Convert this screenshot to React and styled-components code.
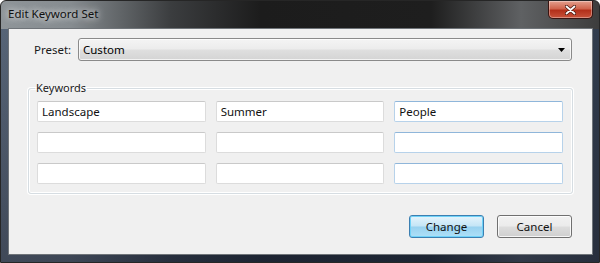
import React from "react";
import styled, { createGlobalStyle } from "styled-components";

const GlobalStyle = createGlobalStyle`
  html, body {
    margin: 0;
    padding: 0;
    background: #ffffff;
  }
  body {
    font-family: "Noto Sans", "Open Sans", sans-serif;
    font-size: 11.5px;
    color: #000;
  }
`

const Window = styled.div`
  width: 600px;
  height: 263px;
  box-sizing: border-box;
  display: flex;
  flex-direction: column;
  border: 1px solid #262626;
  border-radius: 6px 6px 0 0;
  overflow: hidden;
  background:
    linear-gradient(180deg, rgba(0,0,0,0) 0, rgba(0,0,0,0) 28px, rgba(40,60,90,0.55) 28px, rgba(30,40,60,0.7) 100%),
    linear-gradient(90deg, #8f9599 0, #868c90 70px, #3b3d3f 170px, #1c1c1c 260px, #1e1e1e 430px, #5f6163 520px, #3c3c3c 600px);
`

const TitleBar = styled.div`
  height: 27px;
  display: flex;
  align-items: flex-start;
  padding-left: 7px;
`

const Title = styled.div`
  font-size: 11.5px;
  line-height: 16px;
  margin-top: 5px;
  color: #101010;
  text-shadow: 0 0 6px rgba(255,255,255,0.9), 0 0 10px rgba(255,255,255,0.6);
`

const CloseButton = styled.div`
  margin-left: auto;
  margin-right: 6px;
  width: 45px;
  height: 18px;
  box-sizing: border-box;
  border: 1px solid #3a1410;
  border-top: none;
  border-radius: 0 0 5px 5px;
  background: linear-gradient(180deg, #e4a08e 0, #d0644c 45%, #b3301a 55%, #c8523a 100%);
  box-shadow: inset 0 0 0 1px rgba(255,255,255,0.35);
  display: flex;
  align-items: center;
  justify-content: center;

  svg {
    width: 11px;
    height: 10px;
  }
`

const Client = styled.div`
  flex: 1;
  margin: 0 6px 7px 7px;
  background: #f0f0f0;
  border: 1px solid #6f7479;
  display: flex;
  flex-direction: column;
  padding: 9px 20px 0 19px;
`

const PresetRow = styled.div`
  display: flex;
  align-items: center;
  padding-left: 6px;
`

const Label = styled.div`
  width: 44px;
  color: #1a1a1a;
`

const Dropdown = styled.div`
  flex: 1;
  height: 23px;
  box-sizing: border-box;
  border: 1px solid #8a8a8a;
  border-radius: 3px;
  background: linear-gradient(180deg, #f4f4f4 0, #ececec 48%, #dfdfdf 52%, #d4d4d4 100%);
  box-shadow: inset 0 0 0 1px rgba(255,255,255,0.7);
  display: flex;
  align-items: center;
  padding: 0 6px 0 4px;
`

const DropdownText = styled.div`
  flex: 1;
`

const Arrow = styled.svg`
  width: 7px;
  height: 4px;
`

const Group = styled.fieldset`
  margin: 20px -1px 0 0;
  padding: 6px 9px 9px 8px;
  border: 1px solid #d6dde2;
  border-radius: 3px;
  box-shadow: inset 0 0 0 1px #ffffff, 0 0 0 1px #ffffff;
  min-width: 0;
`

const Legend = styled.legend`
  padding: 0 1px;
  margin-left: -2px;
  font-size: 11px;
  line-height: 14px;
  color: #1a1a1a;
`

const Grid = styled.div`
  display: grid;
  grid-template-columns: repeat(3, 1fr);
  column-gap: 10px;
  row-gap: 10px;
`

const Field = styled.div`
  height: 21px;
  box-sizing: border-box;
  background: #ffffff;
  border: 1px solid ${p => (p.$hot ? "#b7d2ea" : "#dcdcdc")};
  border-top-color: ${p => (p.$hot ? "#8fb6da" : "#c9c9c9")};
  border-radius: 2px;
  padding: 0 4px;
  line-height: 19px;
  color: #111;
`

const Footer = styled.div`
  display: flex;
  justify-content: flex-end;
  gap: 13px;
  margin-top: 21px;
`

const Button = styled.div`
  width: 75px;
  height: 23px;
  box-sizing: border-box;
  border-radius: 3px;
  display: flex;
  align-items: center;
  justify-content: center;
  color: #111;
  border: 1px solid ${p => (p.$primary ? "#3c7fb1" : "#707070")};
  background: ${p =>
    p.$primary
      ? "linear-gradient(180deg, #e5f4fc 0, #c4e5f6 48%, #98d1ef 52%, #aee0f8 100%)"
      : "linear-gradient(180deg, #f2f2f2 0, #ebebeb 48%, #dddddd 52%, #cfcfcf 100%)"};
  box-shadow: inset 0 0 0 1px ${p => (p.$primary ? "#6fd2f8" : "rgba(255,255,255,0.8)")};
`

const keywords = [
  ["Landscape", "Summer", "People"],
  ["", "", ""],
  ["", "", ""],
]

export default function App() {
  return (
    <>
      <GlobalStyle />
      <Window>
        <TitleBar>
          <Title>Edit Keyword Set</Title>
          <CloseButton>
            <svg viewBox="0 0 11 10">
              <path d="M1.5 1.5 L9.5 8.5 M9.5 1.5 L1.5 8.5" stroke="#4a1a12" strokeWidth="3.4" strokeLinecap="round" />
              <path d="M1.5 1.5 L9.5 8.5 M9.5 1.5 L1.5 8.5" stroke="#ffffff" strokeWidth="1.8" strokeLinecap="round" />
            </svg>
          </CloseButton>
        </TitleBar>
        <Client>
          <PresetRow>
            <Label>Preset:</Label>
            <Dropdown>
              <DropdownText>Custom</DropdownText>
              <Arrow viewBox="0 0 7 4">
                <path d="M0 0 L7 0 L3.5 4 Z" fill="#000" />
              </Arrow>
            </Dropdown>
          </PresetRow>
          <Group>
            <Legend>Keywords</Legend>
            <Grid>
              {keywords.flatMap((row, r) =>
                row.map((word, c) => (
                  <Field key={`${r}-${c}`} $hot={c === 2}>{word}</Field>
                ))
              )}
            </Grid>
          </Group>
          <Footer>
            <Button $primary>Change</Button>
            <Button>Cancel</Button>
          </Footer>
        </Client>
      </Window>
    </>
  );
}
